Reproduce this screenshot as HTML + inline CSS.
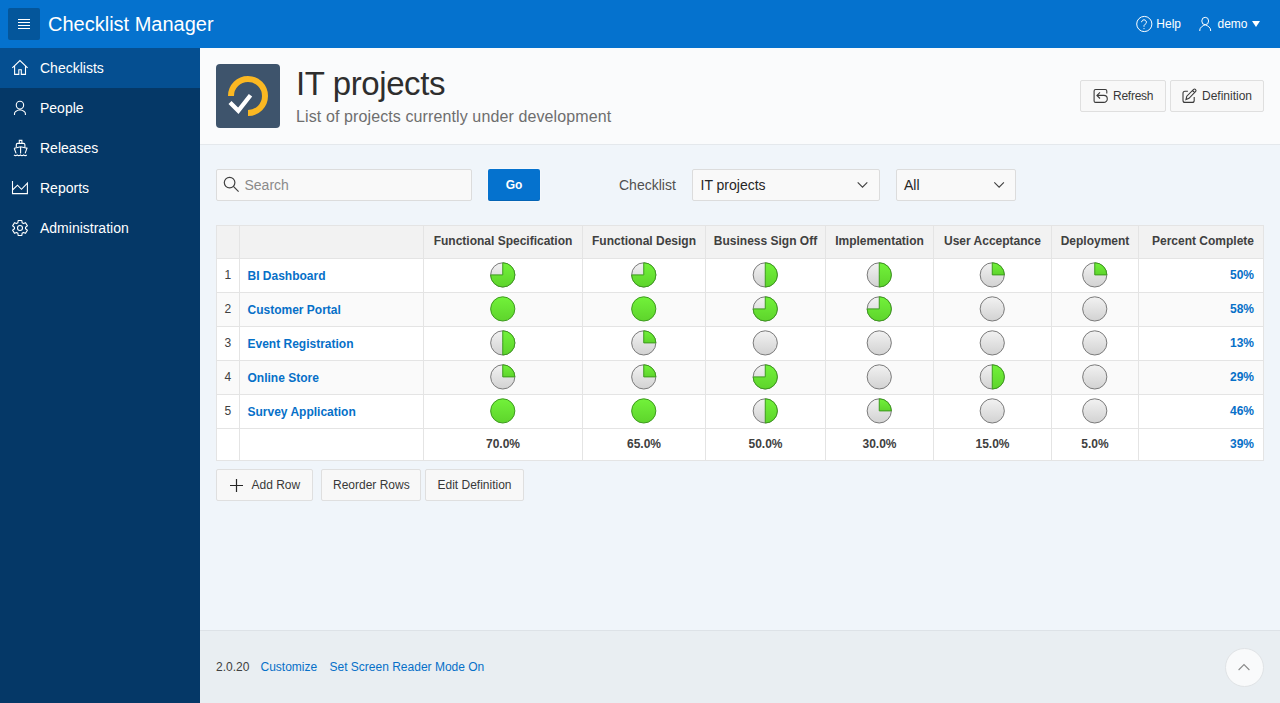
<!DOCTYPE html>
<html><head><meta charset="utf-8">
<style>
*{box-sizing:border-box;margin:0;padding:0}
html,body{width:1280px;height:703px;overflow:hidden}
body{font-family:"Liberation Sans",sans-serif;background:#f0f5fa;position:relative;color:#262626}
.t{position:absolute;white-space:nowrap;line-height:1}
.r{position:absolute}
svg{position:absolute;overflow:visible}
</style></head>
<body>
<div class="r" style="left:0px;top:0px;width:1280px;height:48px;background:#0572ce;"></div>
<div class="r" style="left:8px;top:8px;width:32px;height:32px;background:#04569b;border-radius:2px;"></div>
<div class="r" style="left:18px;top:19px;width:12px;height:1px;background:#fff;"></div>
<div class="r" style="left:18px;top:22px;width:12px;height:1px;background:#fff;"></div>
<div class="r" style="left:18px;top:25px;width:12px;height:1px;background:#fff;"></div>
<div class="r" style="left:18px;top:28px;width:12px;height:1px;background:#fff;"></div>
<div class="t" style="left:48px;top:14.07px;font-size:20px;color:#fff;">Checklist Manager</div>
<svg style="left:0;top:0" width="1280" height="48"><circle cx="1144.3" cy="24" r="7.6" fill="none" stroke="#fff" stroke-width="1"/><path d="M1141.6 22.2 a2.4 2.4 0 1 1 3.6 2.1 c-0.9 0.5 -1.2 0.9 -1.2 1.9 v0.6" fill="none" stroke="#fff" stroke-width="1"/><circle cx="1144" cy="28.6" r="0.6" fill="#fff"/><ellipse cx="1205.2" cy="21" rx="3.4" ry="3.7" fill="none" stroke="#fff" stroke-width="1"/><path d="M1199.8 31 v-1 c0-2.4 2.8-4.3 5.4-5.2 c2.6 0.9 5.4 2.8 5.4 5.2 v1" fill="none" stroke="#fff" stroke-width="1"/><path d="M1252 21 h8 l-4 6 z" fill="#fff"/></svg>
<div class="t" style="left:1156.3px;top:17.84px;font-size:12px;color:#fff;">Help</div>
<div class="t" style="left:1217.5px;top:17.84px;font-size:12px;color:#fff;">demo</div>
<div class="r" style="left:0px;top:48px;width:200px;height:655px;background:#053867;"></div>
<div class="r" style="left:0px;top:48px;width:200px;height:40px;background:#054f91;"></div>
<div class="t" style="left:40px;top:60.85px;font-size:14px;color:#fff;">Checklists</div>
<div class="t" style="left:40px;top:100.85px;font-size:14px;color:#fff;">People</div>
<div class="t" style="left:40px;top:140.85px;font-size:14px;color:#fff;">Releases</div>
<div class="t" style="left:40px;top:180.85px;font-size:14px;color:#fff;">Reports</div>
<div class="t" style="left:40px;top:220.85px;font-size:14px;color:#fff;">Administration</div>
<svg style="left:0;top:0" width="200" height="260" fill="none" stroke="#fff" stroke-width="1.1"><path d="M12.3 67.8 L19.95 60.6 L27.6 67.8 M14.6 66 V74.4 H18.8 V69.7 H21.3 V74.4 H25.5 V66"/><ellipse cx="19.95" cy="105.1" rx="3.7" ry="3.9"/><path d="M14.5 114.9 v-1.2 c0-1.7 2.5-3.4 5.45-4 c2.95 0.6 5.45 2.3 5.45 4 v1.2"/><path d="M19.3 143.4 v-3 h2.6 v3 M16.3 147 v-2.3 c0-0.8 0.5-1.3 1.3-1.3 h6 c0.8 0 1.3 0.5 1.3 1.3 v2.3 M14.2 148.2 l6.4-1.4 l6.4 1.4 l-1.9 5.2 M14.2 148.2 l1.9 5.2 M20.6 146.8 v6.8"/><path d="M14 155 c1.1 0.9 2.1 0.9 3.2 0 c1.1 0.9 2.1 0.9 3.2 0 c1.1 0.9 2.1 0.9 3.2 0 c1.1 0.9 2.1 0.9 3.2 0"/><path d="M12.5 181 V193.6 H27.4 V183.2 L21.5 189.3 L17.5 185.2 L12.5 190"/></svg>
<svg style="left:0;top:0" width="200" height="260" fill="none" stroke="#fff" stroke-width="1.1"><path d="M18.14 220.53 L21.86 220.53 L22.10 222.81 L23.45 223.59 L25.54 222.65 L27.40 225.88 L25.55 227.22 L25.55 228.78 L27.40 230.12 L25.54 233.35 L23.45 232.41 L22.10 233.19 L21.86 235.47 L18.14 235.47 L17.90 233.19 L16.55 232.41 L14.46 233.35 L12.60 230.12 L14.45 228.78 L14.45 227.22 L12.60 225.88 L14.46 222.65 L16.55 223.59 L17.90 222.81 Z" stroke-linejoin="round"/><circle cx="20" cy="228" r="2.5"/></svg>
<div class="r" style="left:200px;top:48px;width:1080px;height:96px;background:#fafbfc;"></div>
<div class="r" style="left:200px;top:144px;width:1080px;height:1px;background:#e4e8ec;"></div>
<div class="r" style="left:216px;top:64px;width:64px;height:64px;background:#3e546c;border-radius:4px;"></div>
<svg style="left:0;top:0" width="300" height="140"><path d="M231 96 A17 17 0 1 1 248 113" fill="none" stroke="#fbb822" stroke-width="6"/><path d="M230 102.5 L238.3 110.8 L250.5 95.2" fill="none" stroke="#fff" stroke-width="4.3" stroke-linejoin="miter"/></svg>
<div class="t" style="left:296px;top:67.07px;font-size:33px;color:#2e2e2e;letter-spacing:-0.4px;">IT projects</div>
<div class="t" style="left:296px;top:109.46px;font-size:16px;color:#6e6e6e;letter-spacing:0.11px;">List of projects currently under development</div>
<div class="r" style="left:1080px;top:80px;width:86px;height:32px;background:#f8f8f8;border:1px solid #dfdfdf;border-radius:2px;"></div>
<div class="r" style="left:1170px;top:80px;width:94px;height:32px;background:#f8f8f8;border:1px solid #dfdfdf;border-radius:2px;"></div>
<svg style="left:0;top:0" width="1280" height="140" fill="none" stroke="#3a3a3a" stroke-width="1.1"><path d="M1106.8 93.6 V91 a1.5 1.5 0 0 0 -1.5 -1.5 H1095.6 a1.5 1.5 0 0 0 -1.5 1.5 V100.9 a1.5 1.5 0 0 0 1.5 1.5 H1103.8 a3.5 3.5 0 0 0 0 -7 H1097 M1100 92.3 L1096.9 95.4 L1100 98.5"/><path d="M1187.9 91.3 H1185 a2 2 0 0 0 -2 2 V100.4 a2 2 0 0 0 2 2 H1192.2 a2 2 0 0 0 2 -2 V97.1"/><path d="M1186 99.5 L1186.8 96.2 L1193.6 89.4 a1.5 1.5 0 0 1 2.1 2.1 L1189 98.3 Z M1192.5 90.5 L1194.6 92.6"/></svg>
<div class="t" style="left:1113px;top:90.34px;font-size:12px;color:#383838;letter-spacing:-0.25px;">Refresh</div>
<div class="t" style="left:1202px;top:90.34px;font-size:12px;color:#383838;">Definition</div>
<div class="r" style="left:216px;top:169px;width:256px;height:32px;background:#f9f9f9;border:1px solid #dcdcdc;border-radius:2px;"></div>
<svg style="left:0;top:0" width="600" height="210" fill="none" stroke="#404040" stroke-width="1.2"><circle cx="229.6" cy="182.6" r="5.3"/><path d="M233.4 186.4 L238.6 191.6"/></svg>
<div class="t" style="left:244.5px;top:177.95px;font-size:14px;color:#8a8a8a;">Search</div>
<div class="r" style="left:488px;top:169px;width:52px;height:32px;background:#0572ce;border-radius:2px;box-shadow:0 0 0 1px rgba(255,255,255,.35), inset 0 -1px 0 rgba(0,0,0,.12);"></div>
<div class="t" style="left:488px;top:178.84px;font-size:12px;color:#fff;font-weight:bold;width:52px;text-align:center;">Go</div>
<div class="t" style="left:619px;top:177.95px;font-size:14px;color:#505050;">Checklist</div>
<div class="r" style="left:692px;top:169px;width:188px;height:32px;background:#f9f9f9;border:1px solid #dcdcdc;border-radius:2px;"></div>
<div class="t" style="left:700.5px;top:177.95px;font-size:14px;color:#262626;">IT projects</div>
<div class="r" style="left:896px;top:169px;width:120px;height:32px;background:#f9f9f9;border:1px solid #dcdcdc;border-radius:2px;"></div>
<div class="t" style="left:904px;top:177.95px;font-size:14px;color:#262626;">All</div>
<svg style="left:0;top:0" width="1100" height="210" fill="none" stroke="#404040" stroke-width="1.1"><path d="M857.7 182.3 L862.5 187.1 L867.3 182.3"/><path d="M994.3 182.3 L999.1 187.1 L1003.9 182.3"/></svg>
<div class="r" style="left:216px;top:225px;width:1048px;height:236px;background:#ffffff;"></div>
<div class="r" style="left:217px;top:226px;width:1046px;height:32px;background:#f2f2f2;"></div>
<div class="r" style="left:217px;top:293px;width:1046px;height:33px;background:#fafafa;"></div>
<div class="r" style="left:217px;top:361px;width:1046px;height:33px;background:#fafafa;"></div>
<div class="r" style="left:216px;top:225px;width:1px;height:236px;background:#e4e4e4;"></div>
<div class="r" style="left:239px;top:225px;width:1px;height:236px;background:#e4e4e4;"></div>
<div class="r" style="left:423px;top:225px;width:1px;height:236px;background:#e4e4e4;"></div>
<div class="r" style="left:582px;top:225px;width:1px;height:236px;background:#e4e4e4;"></div>
<div class="r" style="left:705px;top:225px;width:1px;height:236px;background:#e4e4e4;"></div>
<div class="r" style="left:825px;top:225px;width:1px;height:236px;background:#e4e4e4;"></div>
<div class="r" style="left:933px;top:225px;width:1px;height:236px;background:#e4e4e4;"></div>
<div class="r" style="left:1051px;top:225px;width:1px;height:236px;background:#e4e4e4;"></div>
<div class="r" style="left:1138px;top:225px;width:1px;height:236px;background:#e4e4e4;"></div>
<div class="r" style="left:1263px;top:225px;width:1px;height:236px;background:#e4e4e4;"></div>
<div class="r" style="left:216px;top:225px;width:1048px;height:1px;background:#e4e4e4;"></div>
<div class="r" style="left:216px;top:258px;width:1048px;height:1px;background:#e4e4e4;"></div>
<div class="r" style="left:216px;top:292px;width:1048px;height:1px;background:#e4e4e4;"></div>
<div class="r" style="left:216px;top:326px;width:1048px;height:1px;background:#e4e4e4;"></div>
<div class="r" style="left:216px;top:360px;width:1048px;height:1px;background:#e4e4e4;"></div>
<div class="r" style="left:216px;top:394px;width:1048px;height:1px;background:#e4e4e4;"></div>
<div class="r" style="left:216px;top:428px;width:1048px;height:1px;background:#e4e4e4;"></div>
<div class="r" style="left:216px;top:460px;width:1048px;height:1px;background:#e4e4e4;"></div>
<div class="t" style="left:424px;top:234.84px;font-size:12px;color:#404040;font-weight:bold;width:158px;text-align:center;">Functional Specification</div>
<div class="t" style="left:583px;top:234.84px;font-size:12px;color:#404040;font-weight:bold;width:122px;text-align:center;">Functional Design</div>
<div class="t" style="left:706px;top:234.84px;font-size:12px;color:#404040;font-weight:bold;width:119px;text-align:center;">Business Sign Off</div>
<div class="t" style="left:826px;top:234.84px;font-size:12px;color:#404040;font-weight:bold;width:107px;text-align:center;">Implementation</div>
<div class="t" style="left:934px;top:234.84px;font-size:12px;color:#404040;font-weight:bold;width:117px;text-align:center;">User Acceptance</div>
<div class="t" style="left:1052px;top:234.84px;font-size:12px;color:#404040;font-weight:bold;width:86px;text-align:center;">Deployment</div>
<div class="t" style="left:1139px;top:234.84px;font-size:12px;color:#404040;font-weight:bold;width:115px;text-align:right;">Percent Complete</div>
<div class="t" style="left:224.5px;top:269.34px;font-size:12px;color:#404040;">1</div>
<div class="t" style="left:247.5px;top:270.34px;font-size:12px;color:#0670c8;font-weight:bold;">BI Dashboard</div>
<div class="t" style="left:1139px;top:269.34px;font-size:12px;color:#0670c8;font-weight:bold;width:115px;text-align:right;">50%</div>
<div class="t" style="left:224.5px;top:303.34px;font-size:12px;color:#404040;">2</div>
<div class="t" style="left:247.5px;top:304.34px;font-size:12px;color:#0670c8;font-weight:bold;">Customer Portal</div>
<div class="t" style="left:1139px;top:303.34px;font-size:12px;color:#0670c8;font-weight:bold;width:115px;text-align:right;">58%</div>
<div class="t" style="left:224.5px;top:337.34px;font-size:12px;color:#404040;">3</div>
<div class="t" style="left:247.5px;top:338.34px;font-size:12px;color:#0670c8;font-weight:bold;">Event Registration</div>
<div class="t" style="left:1139px;top:337.34px;font-size:12px;color:#0670c8;font-weight:bold;width:115px;text-align:right;">13%</div>
<div class="t" style="left:224.5px;top:371.34px;font-size:12px;color:#404040;">4</div>
<div class="t" style="left:247.5px;top:372.34px;font-size:12px;color:#0670c8;font-weight:bold;">Online Store</div>
<div class="t" style="left:1139px;top:371.34px;font-size:12px;color:#0670c8;font-weight:bold;width:115px;text-align:right;">29%</div>
<div class="t" style="left:224.5px;top:405.34px;font-size:12px;color:#404040;">5</div>
<div class="t" style="left:247.5px;top:406.34px;font-size:12px;color:#0670c8;font-weight:bold;">Survey Application</div>
<div class="t" style="left:1139px;top:405.34px;font-size:12px;color:#0670c8;font-weight:bold;width:115px;text-align:right;">46%</div>
<svg style="left:0;top:0" width="1280" height="470"><defs><linearGradient id="gg" x1="0" y1="0" x2="0" y2="1"><stop offset="0" stop-color="#f2f2f2"/><stop offset="1" stop-color="#d2d2d2"/></linearGradient><linearGradient id="gr" x1="0" y1="0" x2="0" y2="1"><stop offset="0" stop-color="#72f23a"/><stop offset="1" stop-color="#5ed42c"/></linearGradient></defs><circle cx="502.75" cy="274.9" r="12.1" fill="url(#gg)" stroke="#7a7a7a" stroke-width="1"/><path d="M502.75 274.9 L502.75 262.79999999999995 A12.1 12.1 0 1 1 490.65 274.90 Z" fill="url(#gr)" stroke="#3d9a1e" stroke-width="1" stroke-linejoin="round"/><circle cx="643.75" cy="274.9" r="12.1" fill="url(#gg)" stroke="#7a7a7a" stroke-width="1"/><path d="M643.75 274.9 L643.75 262.79999999999995 A12.1 12.1 0 1 1 631.65 274.90 Z" fill="url(#gr)" stroke="#3d9a1e" stroke-width="1" stroke-linejoin="round"/><circle cx="765.25" cy="274.9" r="12.1" fill="url(#gg)" stroke="#7a7a7a" stroke-width="1"/><path d="M765.25 274.9 L765.25 262.79999999999995 A12.1 12.1 0 0 1 765.25 287.00 Z" fill="url(#gr)" stroke="#3d9a1e" stroke-width="1" stroke-linejoin="round"/><circle cx="879.25" cy="274.9" r="12.1" fill="url(#gg)" stroke="#7a7a7a" stroke-width="1"/><path d="M879.25 274.9 L879.25 262.79999999999995 A12.1 12.1 0 0 1 879.25 287.00 Z" fill="url(#gr)" stroke="#3d9a1e" stroke-width="1" stroke-linejoin="round"/><circle cx="992.25" cy="274.9" r="12.1" fill="url(#gg)" stroke="#7a7a7a" stroke-width="1"/><path d="M992.25 274.9 L992.25 262.79999999999995 A12.1 12.1 0 0 1 1004.35 274.90 Z" fill="url(#gr)" stroke="#3d9a1e" stroke-width="1" stroke-linejoin="round"/><circle cx="1094.75" cy="274.9" r="12.1" fill="url(#gg)" stroke="#7a7a7a" stroke-width="1"/><path d="M1094.75 274.9 L1094.75 262.79999999999995 A12.1 12.1 0 0 1 1106.85 274.90 Z" fill="url(#gr)" stroke="#3d9a1e" stroke-width="1" stroke-linejoin="round"/><circle cx="502.75" cy="308.9" r="12.1" fill="url(#gr)" stroke="#3d9a1e" stroke-width="1"/><circle cx="643.75" cy="308.9" r="12.1" fill="url(#gr)" stroke="#3d9a1e" stroke-width="1"/><circle cx="765.25" cy="308.9" r="12.1" fill="url(#gg)" stroke="#7a7a7a" stroke-width="1"/><path d="M765.25 308.9 L765.25 296.79999999999995 A12.1 12.1 0 1 1 753.15 308.90 Z" fill="url(#gr)" stroke="#3d9a1e" stroke-width="1" stroke-linejoin="round"/><circle cx="879.25" cy="308.9" r="12.1" fill="url(#gg)" stroke="#7a7a7a" stroke-width="1"/><path d="M879.25 308.9 L879.25 296.79999999999995 A12.1 12.1 0 1 1 867.15 308.90 Z" fill="url(#gr)" stroke="#3d9a1e" stroke-width="1" stroke-linejoin="round"/><circle cx="992.25" cy="308.9" r="12.1" fill="url(#gg)" stroke="#7a7a7a" stroke-width="1"/><circle cx="1094.75" cy="308.9" r="12.1" fill="url(#gg)" stroke="#7a7a7a" stroke-width="1"/><circle cx="502.75" cy="342.9" r="12.1" fill="url(#gg)" stroke="#7a7a7a" stroke-width="1"/><path d="M502.75 342.9 L502.75 330.79999999999995 A12.1 12.1 0 0 1 502.75 355.00 Z" fill="url(#gr)" stroke="#3d9a1e" stroke-width="1" stroke-linejoin="round"/><circle cx="643.75" cy="342.9" r="12.1" fill="url(#gg)" stroke="#7a7a7a" stroke-width="1"/><path d="M643.75 342.9 L643.75 330.79999999999995 A12.1 12.1 0 0 1 655.85 342.90 Z" fill="url(#gr)" stroke="#3d9a1e" stroke-width="1" stroke-linejoin="round"/><circle cx="765.25" cy="342.9" r="12.1" fill="url(#gg)" stroke="#7a7a7a" stroke-width="1"/><circle cx="879.25" cy="342.9" r="12.1" fill="url(#gg)" stroke="#7a7a7a" stroke-width="1"/><circle cx="992.25" cy="342.9" r="12.1" fill="url(#gg)" stroke="#7a7a7a" stroke-width="1"/><circle cx="1094.75" cy="342.9" r="12.1" fill="url(#gg)" stroke="#7a7a7a" stroke-width="1"/><circle cx="502.75" cy="376.9" r="12.1" fill="url(#gg)" stroke="#7a7a7a" stroke-width="1"/><path d="M502.75 376.9 L502.75 364.79999999999995 A12.1 12.1 0 0 1 514.85 376.90 Z" fill="url(#gr)" stroke="#3d9a1e" stroke-width="1" stroke-linejoin="round"/><circle cx="643.75" cy="376.9" r="12.1" fill="url(#gg)" stroke="#7a7a7a" stroke-width="1"/><path d="M643.75 376.9 L643.75 364.79999999999995 A12.1 12.1 0 0 1 655.85 376.90 Z" fill="url(#gr)" stroke="#3d9a1e" stroke-width="1" stroke-linejoin="round"/><circle cx="765.25" cy="376.9" r="12.1" fill="url(#gg)" stroke="#7a7a7a" stroke-width="1"/><path d="M765.25 376.9 L765.25 364.79999999999995 A12.1 12.1 0 1 1 753.15 376.90 Z" fill="url(#gr)" stroke="#3d9a1e" stroke-width="1" stroke-linejoin="round"/><circle cx="879.25" cy="376.9" r="12.1" fill="url(#gg)" stroke="#7a7a7a" stroke-width="1"/><circle cx="992.25" cy="376.9" r="12.1" fill="url(#gg)" stroke="#7a7a7a" stroke-width="1"/><path d="M992.25 376.9 L992.25 364.79999999999995 A12.1 12.1 0 0 1 992.25 389.00 Z" fill="url(#gr)" stroke="#3d9a1e" stroke-width="1" stroke-linejoin="round"/><circle cx="1094.75" cy="376.9" r="12.1" fill="url(#gg)" stroke="#7a7a7a" stroke-width="1"/><circle cx="502.75" cy="410.9" r="12.1" fill="url(#gr)" stroke="#3d9a1e" stroke-width="1"/><circle cx="643.75" cy="410.9" r="12.1" fill="url(#gr)" stroke="#3d9a1e" stroke-width="1"/><circle cx="765.25" cy="410.9" r="12.1" fill="url(#gg)" stroke="#7a7a7a" stroke-width="1"/><path d="M765.25 410.9 L765.25 398.79999999999995 A12.1 12.1 0 0 1 765.25 423.00 Z" fill="url(#gr)" stroke="#3d9a1e" stroke-width="1" stroke-linejoin="round"/><circle cx="879.25" cy="410.9" r="12.1" fill="url(#gg)" stroke="#7a7a7a" stroke-width="1"/><path d="M879.25 410.9 L879.25 398.79999999999995 A12.1 12.1 0 0 1 891.35 410.90 Z" fill="url(#gr)" stroke="#3d9a1e" stroke-width="1" stroke-linejoin="round"/><circle cx="992.25" cy="410.9" r="12.1" fill="url(#gg)" stroke="#7a7a7a" stroke-width="1"/><circle cx="1094.75" cy="410.9" r="12.1" fill="url(#gg)" stroke="#7a7a7a" stroke-width="1"/></svg>
<div class="t" style="left:424px;top:437.84px;font-size:12px;color:#404040;font-weight:bold;width:158px;text-align:center;">70.0%</div>
<div class="t" style="left:583px;top:437.84px;font-size:12px;color:#404040;font-weight:bold;width:122px;text-align:center;">65.0%</div>
<div class="t" style="left:706px;top:437.84px;font-size:12px;color:#404040;font-weight:bold;width:119px;text-align:center;">50.0%</div>
<div class="t" style="left:826px;top:437.84px;font-size:12px;color:#404040;font-weight:bold;width:107px;text-align:center;">30.0%</div>
<div class="t" style="left:934px;top:437.84px;font-size:12px;color:#404040;font-weight:bold;width:117px;text-align:center;">15.0%</div>
<div class="t" style="left:1052px;top:437.84px;font-size:12px;color:#404040;font-weight:bold;width:86px;text-align:center;">5.0%</div>
<div class="t" style="left:1139px;top:437.84px;font-size:12px;color:#0670c8;font-weight:bold;width:115px;text-align:right;">39%</div>
<div class="r" style="left:216px;top:469px;width:97px;height:32px;background:#f8f8f8;border:1px solid #dfdfdf;border-radius:2px;"></div>
<svg style="left:0;top:0" width="300" height="500" fill="none" stroke="#262626" stroke-width="1.2"><path d="M236.5 479 V492 M230 485.5 H243"/></svg>
<div class="t" style="left:251.5px;top:479.34px;font-size:12px;color:#383838;">Add Row</div>
<div class="r" style="left:321px;top:469px;width:100px;height:32px;background:#f8f8f8;border:1px solid #dfdfdf;border-radius:2px;"></div>
<div class="t" style="left:333px;top:479.34px;font-size:12px;color:#383838;">Reorder Rows</div>
<div class="r" style="left:425px;top:469px;width:99px;height:32px;background:#f8f8f8;border:1px solid #dfdfdf;border-radius:2px;"></div>
<div class="t" style="left:437.5px;top:479.34px;font-size:12px;color:#383838;">Edit Definition</div>
<div class="r" style="left:200px;top:630px;width:1080px;height:73px;background:#e9eef2;"></div>
<div class="r" style="left:200px;top:630px;width:1080px;height:1px;background:#dde2e7;"></div>
<div class="t" style="left:216px;top:660.84px;font-size:12px;color:#404040;">2.0.20</div>
<div class="t" style="left:260.5px;top:660.84px;font-size:12px;color:#0670c8;">Customize</div>
<div class="t" style="left:329.5px;top:660.84px;font-size:12px;color:#0670c8;">Set Screen Reader Mode On</div>
<div class="r" style="left:1224.5px;top:647.5px;width:39px;height:39px;background:#f9fafb;border:1px solid #e0e3e6;border-radius:50%;"></div>
<svg style="left:0;top:0" width="1280" height="703" fill="none" stroke="#8a8a8a" stroke-width="1.1"><path d="M1238.6 670 L1244 664.6 L1249.4 670"/></svg>
</body></html>
